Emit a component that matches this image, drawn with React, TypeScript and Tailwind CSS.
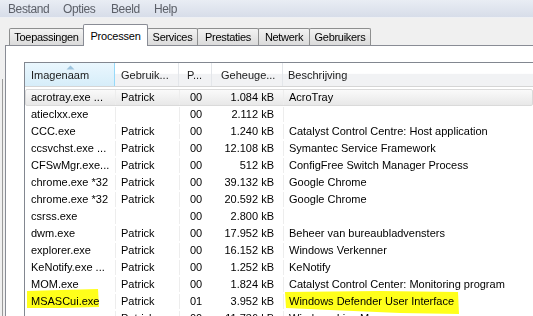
const rows = [
  ["acrotray.exe ...", "Patrick", "00", "1.084 kB", "AcroTray"],
  ["atieclxx.exe", "", "00", "2.112 kB", ""],
  ["CCC.exe", "Patrick", "00", "1.240 kB", "Catalyst Control Centre: Host application"],
  ["ccsvchst.exe ...", "Patrick", "00", "12.108 kB", "Symantec Service Framework"],
  ["CFSwMgr.exe...", "Patrick", "00", "512 kB", "ConfigFree Switch Manager Process"],
  ["chrome.exe *32", "Patrick", "00", "39.132 kB", "Google Chrome"],
  ["chrome.exe *32", "Patrick", "00", "20.592 kB", "Google Chrome"],
  ["csrss.exe", "", "00", "2.800 kB", ""],
  ["dwm.exe", "Patrick", "00", "17.952 kB", "Beheer van bureaubladvensters"],
  ["explorer.exe", "Patrick", "00", "16.152 kB", "Windows Verkenner"],
  ["KeNotify.exe ...", "Patrick", "00", "1.252 kB", "KeNotify"],
  ["MOM.exe", "Patrick", "00", "1.824 kB", "Catalyst Control Center: Monitoring program"],
  ["MSASCui.exe", "Patrick", "01", "3.952 kB", "Windows Defender User Interface"],
  ["", "Patrick", "00", "11.736 kB", "Windows Live Messenger"],
];

const tabs = [
  { label: "Toepassingen", w: "w-[75px]" },
  { label: "Processen", w: "w-[65px]", active: true },
  { label: "Services", w: "w-[51px]" },
  { label: "Prestaties", w: "w-[62px]" },
  { label: "Netwerk", w: "w-[52px]" },
  { label: "Gebruikers", w: "w-[62px]" },
];

const cols = "grid grid-cols-[90px_64px_33px_71px_1fr]";

function Tab({ label, w, active }: { label: string; w: string; active?: boolean }) {
  if (active) {
    return (
      <div
        className={`${w} h-[22px] -ml-px -mb-px z-10 relative bg-white border border-b-0 border-[#898c95] rounded-t-[2px] flex justify-center pt-[3px] text-[11px] tracking-[-0.2px] text-black`}
      >
        {label}
      </div>
    );
  }
  return (
    <div
      className={`${w} h-[17px] -ml-px first:ml-0 bg-gradient-to-b from-[#f3f3f3] to-[#dbdbdb] border border-b-0 border-[#8e8f8f] rounded-t-[2px] flex items-center justify-center text-[11px] tracking-[-0.3px] text-black leading-none`}
    >
      {label}
    </div>
  );
}

export default function App() {
  return (
    <div
      className="relative w-[533px] h-[316px] overflow-hidden bg-[#f0f0f0] flex flex-col"
      style={{ fontFamily: '"Liberation Sans", Arial, sans-serif' }}
    >
      {/* menu */}
      <div className="h-[18px] shrink-0 bg-gradient-to-b from-[#e9edf4] to-[#d7dde9] border-b border-[#eef0f4] flex items-center pl-[8px] pt-px text-[12px] tracking-[-0.4px] text-[#5c6069]">
        <span className="w-[55px]">Bestand</span>
        <span className="w-[48px]">Opties</span>
        <span className="w-[43px]">Beeld</span>
        <span>Help</span>
      </div>

      {/* tabs */}
      <div className="mt-[6px] h-[21px] shrink-0 flex items-end pl-[9px]">
        {tabs.map((t) => (
          <Tab key={t.label} {...t} />
        ))}
      </div>

      {/* panel */}
      <div className="flex-1 ml-[5px] bg-white border-t border-l border-[#898c95] pt-[16px] pl-[18px] min-h-0">
        <div className="h-full border-t border-l border-[#828790] bg-white text-[11px] text-black">
          {/* header */}
          <div className={`${cols} h-[24px] border-b border-[#d5d5d5] bg-gradient-to-b from-white from-45% to-[#f1f2f4] to-50% text-[#1b1b1b]`}>
            <div className="relative pl-[6px] pt-px flex items-center bg-gradient-to-b from-[#eaf7fe] to-[#d6edf9] border-r border-[#96d9f9]">
              <svg className="absolute left-[41px] top-[2px]" width="9" height="5" viewBox="0 0 9 5">
                <path d="M4.5 0.5 L8.5 4.5 L0.5 4.5 Z" fill="#9dc4de" />
              </svg>
              Imagenaam
            </div>
            <div className="pl-[6px] pt-px flex items-center border-r border-[#e3e6ea]">Gebruik...</div>
            <div className="pl-[8px] pt-px flex items-center border-r border-[#e3e6ea]">P...</div>
            <div className="pl-[9px] pt-px flex items-center border-r border-[#e3e6ea]">Geheuge...</div>
            <div className="pl-[5px] pt-px flex items-center whitespace-nowrap">Beschrijving</div>
          </div>

          {/* rows */}
          <div className="pt-[2px]">
            {rows.map((r, i) => (
              <div
                key={i}
                className={`${cols} h-[17px] leading-[15px] whitespace-nowrap ${
                  i === 0
                    ? "border border-[#dadada] rounded-[2px] bg-gradient-to-b from-[#fafafa] to-[#e8e8e8]"
                    : "border border-transparent"
                }`}
              >
                <div className="pl-[5px] border-r border-[#ededed] overflow-hidden">{r[0]}</div>
                <div className="pl-[5px] border-r border-[#ededed]">{r[1]}</div>
                <div className="pl-[10px]">{r[2]}</div>
                <div className="text-right pr-[9px] border-r border-[#ededed]">{r[3]}</div>
                <div className="pl-[5px]">{r[4]}</div>
              </div>
            ))}
          </div>
        </div>
      </div>

      {/* window edge behind */}
      <div className="absolute left-[2px] top-[79px] bottom-0 w-px bg-[#9a9a9a]" />

      {/* highlighter marks */}
      <svg className="absolute inset-0 pointer-events-none mix-blend-multiply" width="533" height="316">
        <path d="M27 291 L60 290 L98 289 L99 307 L62 308 L27 308 Z" fill="#ffff1a" />
        <path d="M285 292 L380 291 L458 292 L459 314 L400 313 L330 310 L286 308 Z" fill="#ffff1a" />
      </svg>
    </div>
  );
}
